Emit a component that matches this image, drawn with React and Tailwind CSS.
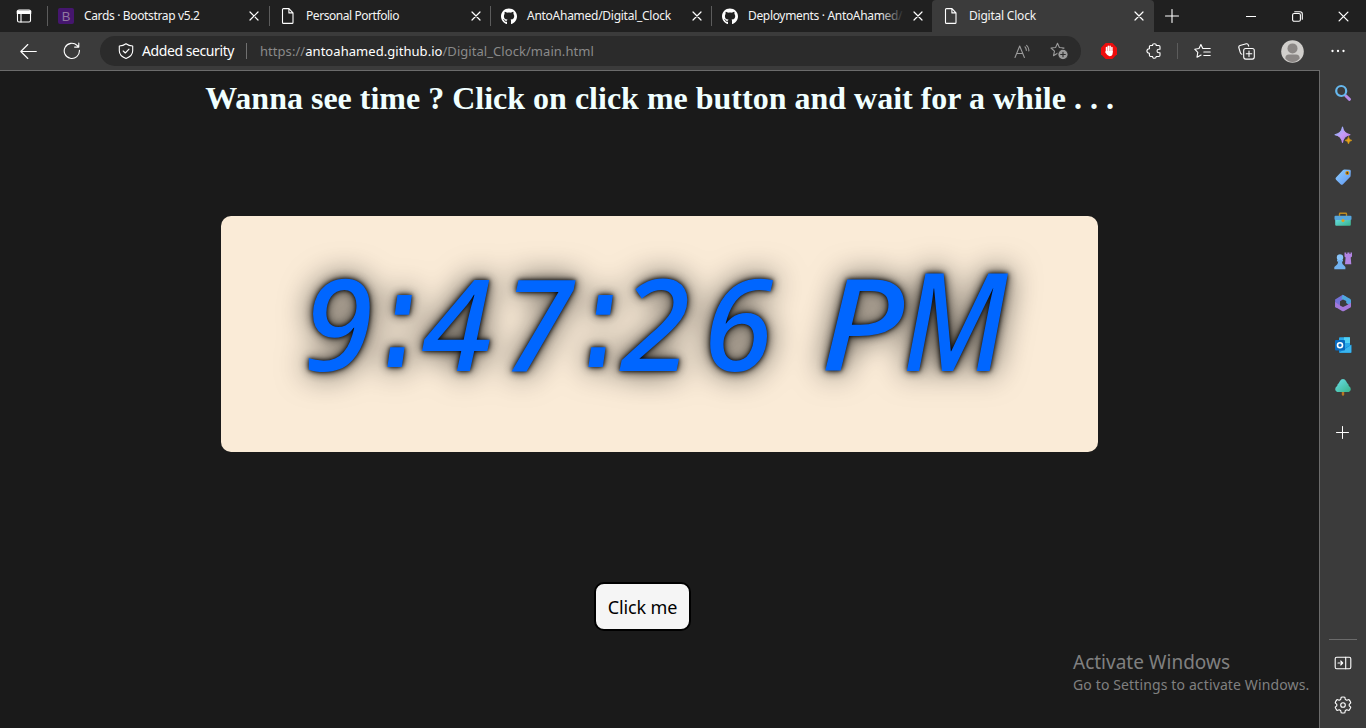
import React from "react";
import { FaGithub } from "react-icons/fa";

const ui = "font-['Noto_Sans','Open_Sans',sans-serif]";

function Icon({ size = 16, box = 16, className = "", children }) {
  return (
    <svg
      width={size}
      height={size}
      viewBox={`0 0 ${box} ${box}`}
      fill="none"
      stroke="currentColor"
      strokeWidth="1.1"
      strokeLinecap="round"
      strokeLinejoin="round"
      className={`shrink-0 ${className}`}
    >
      {children}
    </svg>
  );
}

const Page = () => (
  <Icon>
    <path d="M3.5 .6H9L13 4.8V14.4Q13 15.4 12 15.4H3.5Q2.5 15.4 2.5 14.4V1.6Q2.5.6 3.5.6ZM8.9.8V4.9H13" />
  </Icon>
);

const Close = ({ size = 10 }) => (
  <Icon size={size} box={10}>
    <path d="M1 1 9 9M9 1 1 9" strokeWidth="1.2" />
  </Icon>
);

const Bootstrap = () => (
  <span className="flex h-4 w-4 items-center justify-center rounded-[2px] bg-[#45166e] font-['Liberation_Sans',sans-serif] text-[13px] leading-none text-[#8f789f]">
    B
  </span>
);

const Github = () => <FaGithub size={17} />;

function Tab({ icon, title, active, wide, fade, spacing }) {
  return (
    <div
      className={`flex h-8 shrink-0 items-center ${wide ? "w-[222px]" : "w-[221px]"} ${
        active ? "rounded-t-[4px] bg-[#3b3b3b]" : ""
      }`}
    >
      <div className={`h-5 w-px ${active ? "" : "bg-[#5c5c5c]"}`} />
      <div className="ml-[10px] flex w-4 shrink-0 justify-center">{icon}</div>
      <div
        className={`relative ml-[10px] w-[156px] shrink-0 whitespace-nowrap text-xs text-[#f4f4f4] ${spacing}`}
      >
        {title}
        {fade && <div className="absolute top-0 right-0 h-full w-6 bg-linear-to-r from-transparent to-[#202020]" />}
      </div>
      <div className="ml-[9px] flex w-[10px] justify-center">
        <Close />
      </div>
    </div>
  );
}

function Cell({ w = "w-11", children }) {
  return <div className={`flex shrink-0 items-center justify-center ${w}`}>{children}</div>;
}

function TabStrip() {
  return (
    <div className="flex h-8 shrink-0 bg-[#202020] text-white">
      <div className="flex w-[47px] items-center justify-center">
        <Icon>
          <rect x="1.5" y="2" width="13" height="12" rx="1.5" />
          <path d="M1.5 3.5h13M1.5 5h13" strokeWidth="1.8" />
          <path d="M5 5v9" />
        </Icon>
      </div>
      <Tab wide icon={<Bootstrap />} title="Cards · Bootstrap v5.2" spacing="tracking-[-0.35px]" />
      <Tab icon={<Page />} title="Personal Portfolio" spacing="tracking-[-0.44px]" />
      <Tab icon={<Github />} title="AntoAhamed/Digital_Clock" spacing="tracking-[-0.27px]" />
      <Tab icon={<Github />} title="Deployments · AntoAhamed/" fade spacing="tracking-[-0.33px]" />
      <Tab wide active icon={<Page />} title="Digital Clock" spacing="tracking-[-0.22px]" />
      <Cell w="w-9">
        <Icon size={14} box={14}>
          <path d="M7 .5v13M.5 7h13" />
        </Icon>
      </Cell>
      <div className="flex-1" />
      <Cell w="w-[46px]">
        <Icon size={10} box={10}>
          <path d="M0 5.5h10" strokeWidth="1" />
        </Icon>
      </Cell>
      <Cell w="w-[46px]">
        <Icon size={11} box={11}>
          <rect x=".6" y="2.5" width="7.8" height="7.8" rx="1.5" />
          <path d="M2.7.7H8Q10.3.7 10.3 3V8.2" />
        </Icon>
      </Cell>
      <Cell w="w-[46px]">
        <Close size={11} />
      </Cell>
    </div>
  );
}

const starPath = "M7.5 1.2 9.4 5.5 14 6 10.5 9.1 11.5 13.7 7.5 11.3 3.5 13.7 4.5 9.1 1 6 5.6 5.5Z";

function Toolbar() {
  return (
    <div className="flex h-[38px] shrink-0 items-center bg-[#3b3b3b] pl-[6px] text-white">
      <Cell>
        <Icon size={17} box={17}>
          <path d="M16.3 8.5H.8M7.8 1.5.8 8.5 7.8 15.5" />
        </Icon>
      </Cell>
      <Cell>
        <Icon size={18} box={18}>
          <path d="M16.4 8.3A7.6 7.6 0 1 1 14.2 3.5L15.8 5M15.8 1V5.1H11.6" />
        </Icon>
      </Cell>
      <div className="ml-[6px] flex h-[30px] w-[981px] shrink-0 items-center rounded-full bg-[#2b2b2b] pl-[18px]">
        <Icon>
          <path d="M8 .7Q10.8 2.8 14.7 3V7.8Q14.7 13 8 15.5 1.3 13 1.3 7.8V3Q5.2 2.8 8 .7ZM5.2 8 7.3 10 11 6.2" />
        </Icon>
        <span className="ml-2 w-[104px] text-sm tracking-[-0.42px] whitespace-nowrap">Added security</span>
        <span className="h-4 w-px bg-[#707070]" />
        <span className="ml-[13px] flex-1 pt-px text-[13px] tracking-[0.05px] whitespace-nowrap text-[#8a8a8a]">
          https://<span className="text-white">antoahamed.github.io</span>/Digital_Clock/main.html
        </span>
        <div className="flex w-[37px] justify-center text-[#9b9b9b]">
          <Icon size={17} box={17}>
            <path d="M1 14.5 5.7 3 10.4 14.5M2.6 10.5H8.8M11 3.8Q12.5 5.5 12.3 7.5M12.6 2.3Q15.3 4.9 14.8 8" />
          </Icon>
        </div>
        <div className="mr-[3px] flex w-[37px] justify-center pr-[2px] text-[#9b9b9b]">
          <Icon size={18} box={18}>
            <path d={starPath} />
            <circle cx="13" cy="12.5" r="5.2" fill="#9b9b9b" stroke="#2b2b2b" />
            <path d="M13 10.2v4.6M10.7 12.5h4.6" stroke="#2b2b2b" />
          </Icon>
        </div>
      </div>
      <div className="w-[6px] shrink-0" />
      <Cell>
        <Icon size={16}>
          <path d="M4.7 0h6.6L16 4.7v6.6L11.3 16H4.7L0 11.3V4.7Z" fill="#ed0c0c" stroke="none" />
          <path d="M5.5 4.5V9M7.3 3.3V9M9.1 3.3V9M10.9 4.5V9" stroke="white" strokeWidth="1.5" />
          <path d="M4.7 8h7V10Q11.5 13.2 8.5 13.2 6.5 13.2 4.3 9.6Z" fill="white" stroke="none" />
        </Icon>
      </Cell>
      <div className="w-px shrink-0" />
      <Cell>
        <Icon size={16}>
          <path d="M4.6 2.5H6.6Q6.4.7 8.4.7T10.2 2.5H12.8Q14 2.5 14 3.7V6.2H13Q11 6.2 11 8T13 9.8H14V12.3Q14 13.5 12.8 13.5H10.2Q10.2 15.3 8.4 15.3T6.6 13.5H4.6Q3.4 13.5 3.4 12.3V10.2Q.9 10 .9 8T3.4 5.8V3.7Q3.4 2.5 4.6 2.5Z" />
        </Icon>
      </Cell>
      <div className="mr-[2px] ml-px h-4 w-px shrink-0 bg-[#5c5c5c]" />
      <Cell>
        <Icon size={17} box={17}>
          <path d="M10.4 5.5H8.8L6.9 1.5 5 5.5.7 6.2 3.8 9.3 3 14.2 7.1 12M10.7 5.5H16.2M9.8 9H16.2M9.8 12.5H16.2" />
        </Icon>
      </Cell>
      <Cell>
        <Icon size={17} box={17}>
          <rect x="5.7" y="5.5" width="10.6" height="10.6" rx="2" />
          <path d="M11 8v5.6M8.2 10.8h5.6M3.8 11.2Q2.7 10.8 2.3 9.6L.8 4.5Q.5 3 2 2.5L8.3.8Q9.8.4 10.3 2L10.7 3.2" />
        </Icon>
      </Cell>
      <Cell w="w-12">
        <Icon size={23} box={23}>
          <circle cx="11.5" cy="11.5" r="11.3" fill="#d1cfcc" stroke="none" />
          <circle cx="11.5" cy="8.4" r="5" fill="#8b8785" stroke="none" />
          <path d="M4.3 18.5Q4.3 14.5 8 14.5H15Q18.7 14.5 18.7 18.5 15.6 22 11.5 22T4.3 18.5Z" fill="#8b8785" stroke="none" />
        </Icon>
      </Cell>
      <Cell>
        <Icon size={16}>
          <path d="M2.5 8h.01M8 8h.01M13.5 8h.01" strokeWidth="2.3" />
        </Icon>
      </Cell>
    </div>
  );
}

const SideCell = ({ children }) => (
  <div className="flex h-[42px] shrink-0 items-center justify-center">
    <Icon size={18} box={18}>
      {children}
    </Icon>
  </div>
);

function Sidebar() {
  return (
    <div className="flex w-[47px] shrink-0 flex-col border-l border-[#6b6b6b] bg-[#3b3b3b] pt-[2px] text-white">
      <svg width="0" height="0" className="absolute">
        <defs>
          <linearGradient id="blue" x1="0" y1="0" x2="1" y2="1">
            <stop stopColor="#8fd0ff" />
            <stop offset="1" stopColor="#5f95f2" />
          </linearGradient>
          <linearGradient id="violet" x1="0" y1="0" x2="1" y2="1">
            <stop stopColor="#79bdff" />
            <stop offset=".5" stopColor="#c79bf5" />
            <stop offset="1" stopColor="#b175e5" />
          </linearGradient>
          <linearGradient id="teal" x1="0" y1="0" x2="1" y2="1">
            <stop stopColor="#6be0ea" />
            <stop offset="1" stopColor="#39b38a" />
          </linearGradient>
        </defs>
      </svg>
      <SideCell>
        <path d="m11.5 11.5 4 3.8" stroke="#b58be8" strokeWidth="3" />
        <circle cx="7.2" cy="7" r="5" stroke="#66b8ee" strokeWidth="2.2" />
      </SideCell>
      <SideCell>
        <path d="M8.5 1Q9.5 7.5 16 8.7 9.5 9.8 8.5 16.5 7.5 9.8 1 8.7 7.5 7.5 8.5 1Z" fill="url(#violet)" stroke="url(#violet)" />
        <path d="M14.5 10.8Q15 14 18 14.4 15 14.8 14.5 18 14 14.8 11 14.4 14 14 14.5 10.8Z" fill="#e4a317" stroke="#e4a317" strokeWidth=".5" />
      </SideCell>
      <SideCell>
        <path d="M2 9.5 8.8 2.2Q9.5 1.5 10.5 1.5L15.5 1.7Q16.7 1.8 16.8 3L16.6 7.7Q16.5 8.7 15.8 9.3L9 16.2Q7.7 17.2 6.6 16.2L2 11.8Q1 10.6 2 9.5Z" fill="url(#blue)" stroke="none" />
        <circle cx="13.3" cy="5" r="1.5" fill="#473720" stroke="#d9930f" />
      </SideCell>
      <SideCell>
        <path d="M5.5 5.5V4Q5.5 3.3 6.2 3.3H11.8Q12.5 3.3 12.5 4V5.5" stroke="#bd8a1e" strokeWidth="1.4" />
        <rect x="1.2" y="8" width="15.6" height="7.8" rx="1" fill="url(#teal)" stroke="none" />
        <rect x=".5" y="5.8" width="17" height="4.2" rx="1" fill="#56a6dc" stroke="none" />
        <circle cx="9" cy="10.5" r="1.5" fill="#e0a11c" stroke="none" />
      </SideCell>
      <SideCell>
        <path d="M10.5.5H12.3V2H13.3V.5H15.5V2H16.5V.5H18V4.5L16.7 5.5 17.3 12.3H11L11.6 5.5 10.5 4.5Z" fill="#b284e3" stroke="none" />
        <circle cx="6" cy="5.5" r="3.2" fill="#88c4fa" stroke="none" />
        <path d="M3 8H9V9.5H7.9Q8 12 10 13.5L11.4 15V17.3H.3V15L2 13.5Q4.1 12 4.2 9.5H3Z" fill="#72b2ef" stroke="none" />
      </SideCell>
      <SideCell>
        <path d="M8.7.8 12.6 3 9 5.5 6 7.3V12L2.2 14 1.1 13V5.5Z" fill="#7471d8" stroke="none" />
        <path d="M8.7.8 16 4.7Q17 5.4 17 6.5V12.2L12.2 9V7L7.5 4.8Z" fill="#4da7df" stroke="none" />
        <path d="M1.1 12.8V8L6 11.5 9 13 12.2 11.5 17 8.7V12.2Q17 13.2 16 13.8L10.2 17Q9 17.5 8 17Z" fill="#a478d9" stroke="none" />
      </SideCell>
      <SideCell>
        <rect x="5" y="1.3" width="11" height="11" rx="1" fill="#28a8ea" stroke="none" />
        <path d="M10 1.3H16V7H10Z" fill="#50d0f5" stroke="none" />
        <path d="M5 9.5 11 12 17.3 8.5V16Q17.3 16.7 16.5 16.7H6Q5 16.7 5 15.7Z" fill="#1490df" stroke="none" />
        <path d="M5 16.7 17.3 9V16.7Z" fill="#39b5ee" stroke="none" />
        <rect x="1" y="4" width="10" height="10.5" rx="1" fill="#0869bd" stroke="none" />
        <circle cx="6" cy="9.2" r="2.5" stroke="white" strokeWidth="1.6" />
      </SideCell>
      <SideCell>
        <path d="M9 12V16.5" stroke="#b77522" strokeWidth="2.4" />
        <path d="M9 1Q11 1 12 3L13.3 5.2Q15 6.5 14.7 7.7 17 9.5 16.8 11.2 16.5 14 13.5 14H4.5Q1.5 14 1.2 11.2 1 9.5 3.3 7.7 3 6.5 4.7 5.2L6 3Q7 1 9 1Z" fill="url(#teal)" stroke="none" />
      </SideCell>
      <div className="mt-1 flex h-10 items-center justify-center pr-px">
        <Icon size={13} box={13}>
          <path d="M6.5.5v12M.5 6.5h12" strokeWidth="1" />
        </Icon>
      </div>
      <div className="flex-1" />
      <div className="mx-auto h-px w-7 bg-[#6b6b6b]" />
      <div className="mt-[2px]">
        <SideCell>
          <rect x="1.2" y="3.2" width="15.6" height="11.6" rx="1.5" />
          <path d="M11.7 3.2V14.8M4 9H8.6M6.7 7 8.7 9 6.7 11" />
        </SideCell>
        <SideCell>
          <circle cx="9" cy="9" r="2.3" />
          <path d="M7.2 1.2Q9 .7 10.8 1.2L11.3 3.5 12.8 4.3 15 3.6Q16.3 5 16.8 6.8L15.2 8.3V9.8L16.8 11.2Q16.3 13 15 14.5L12.8 13.8 11.3 14.6 10.8 16.8Q9 17.3 7.2 16.8L6.7 14.6 5.2 13.8 3 14.5Q1.7 13 1.2 11.2L2.8 9.8V8.3L1.2 6.8Q1.7 5 3 3.6L5.2 4.3 6.7 3.5Z" />
        </SideCell>
      </div>
      <div className="h-[2px]" />
    </div>
  );
}

const Glyph = ({ className, children }) => (
  <span className={`flex shrink-0 items-baseline justify-center ${className}`}>{children}</span>
);

const Colon = ({ className }) => (
  <Glyph
    className={`-translate-y-1 scale-x-[0.72] font-['Liberation_Sans',sans-serif] text-[142px] font-bold ${className}`}
  >
    :
  </Glyph>
);

function Clock() {
  return (
    <div className="mt-[99px] ml-[221px] flex h-[236px] w-[877px] rounded-[10px] bg-[#faebd7] pt-[31px]">
      <div className="flex h-[150px] w-full items-baseline pl-[78px] font-['Noto_Sans',sans-serif] text-[127px] leading-[150px] font-medium text-[#0066ff] italic [filter:drop-shadow(0_0_2px_#000)_drop-shadow(0_0_5px_rgba(0,0,0,0.7))_drop-shadow(0_0_15px_rgba(0,0,0,0.65))]">
        <Glyph className="w-[78px]">9</Glyph>
        <Colon className="w-[46px]" />
        <Glyph className="w-[68px]">4</Glyph>
        <Glyph className="ml-[6px] w-[82px]">7</Glyph>
        <Colon className="ml-1 w-9" />
        <Glyph className="w-[72px]">2</Glyph>
        <Glyph className="ml-[6px] w-[82px]">6</Glyph>
        <Glyph className="ml-[43px] w-20 origin-center scale-x-[1.14]">P</Glyph>
        <Glyph className="ml-[3px] w-[100px] origin-[50%_80%] scale-x-[0.97] scale-y-[1.07]">M</Glyph>
      </div>
    </div>
  );
}

export default function App() {
  return (
    <div className={`flex h-[728px] w-[1366px] flex-col overflow-hidden bg-[#3b3b3b] ${ui}`}>
      <TabStrip />
      <Toolbar />
      <div className="flex min-h-0 flex-1">
        <main className="flex w-[1319px] shrink-0 flex-col border-t border-[#6b6b6b] bg-[#1a1a1a] pt-[9px]">
          <h1 className="text-center font-['Liberation_Serif',serif] text-[32px] leading-[37px] font-bold text-[#f0ffff]">
            Wanna see time ? Click on click me button and wait for a while . . .
          </h1>
          <Clock />
          <button className="mt-[130px] ml-[594px] h-[49px] w-[97px] rounded-[10px] border-2 border-black bg-[#f5f5f5] pt-[2px] text-[18px] tracking-[-0.15px] whitespace-nowrap text-black">
            Click me
          </button>
          <div className="mt-[18px] ml-[1073px] whitespace-nowrap text-[#808080]">
            <div className="text-[19px] leading-[26px]">Activate Windows</div>
            <div className="text-[14px] leading-5 tracking-[0.13px]">Go to Settings to activate Windows.</div>
          </div>
        </main>
        <Sidebar />
      </div>
    </div>
  );
}
